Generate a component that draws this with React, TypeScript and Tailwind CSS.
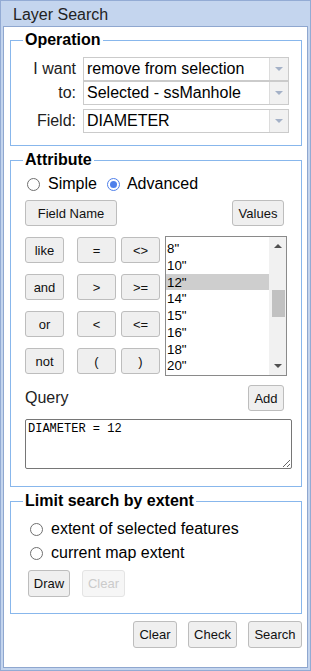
import React from "react";
import clsx from "clsx";

const sans = "font-['Liberation_Sans',Arial,sans-serif]";

type BtnProps = {
  children: React.ReactNode;
  className?: string;
  disabled?: boolean;
};

const Btn: React.FC<BtnProps> = ({ children, className, disabled }) => (
  <button
    type="button"
    disabled={disabled}
    className={clsx(
      "h-[26px] rounded-[3px] border text-[13px] leading-none",
      disabled
        ? "border-[#e4e4e4] bg-[#f6f6f6] text-[#cbcbcb]"
        : "border-[#bdbdbd] bg-[#efefef] text-[#111]",
      className
    )}
  >
    {children}
  </button>
);

const Select: React.FC<{ value: string; className?: string }> = ({ value, className }) => (
  <div className={clsx("flex h-[24px] border border-[#cbcbcb] bg-white", className)}>
    <div className="flex-1 truncate pl-[3px] text-[16px] leading-[22px] text-black">{value}</div>
    <div className="flex w-[19px] items-center justify-center border-l border-[#dcdcdc] bg-[#f1f1f1]">
      <span className="h-0 w-0 border-l-[4px] border-r-[4px] border-t-[4px] border-l-transparent border-r-transparent border-t-[#a4b1c7]" />
    </div>
  </div>
);

const Radio: React.FC<{ checked?: boolean }> = ({ checked }) => (
  <span
    className={clsx(
      "flex h-[13px] w-[13px] shrink-0 items-center justify-center rounded-full border bg-white",
      checked ? "border-[#4f80ea]" : "border-[#6f6f6f]"
    )}
  >
    {checked && <span className="h-[7px] w-[7px] rounded-full bg-[#4f80ea]" />}
  </span>
);

const Legend: React.FC<{ children: React.ReactNode }> = ({ children }) => (
  <legend className="ml-[12px] px-[2px] text-[16px] font-bold leading-[18px] text-black">{children}</legend>
);

const ops = [
  ["like", "=", "<>"],
  ["and", ">", ">="],
  ["or", "<", "<="],
  ["not", "(", ")"],
];

const sizes = ['8"', '10"', '12"', '14"', '15"', '16"', '18"', '20"'];

export default function App() {
  return (
    <div
      className={`${sans} flex h-[671px] w-[311px] flex-col border border-[#93abd4] bg-[#c4d5ee] px-[2px] pb-[2px] text-[#222]`}
    >
      <div className="h-[25px] pl-[10px] text-[16px] leading-[28px] text-[#222]">Layer Search</div>

      <div className="flex flex-1 flex-col border border-[#8fa7cf] bg-white pl-[6px] pr-[5px]">
        {/* Operation */}
        <fieldset className="mt-[4px] min-w-0 border border-[#88b7ec]">
          <Legend>Operation</Legend>
          <div className="pb-[12px] pr-[12px]">
            <div className="mt-[8px] flex">
              <div className="w-[65px] text-right text-[16px] leading-[24px] text-[#222]">
                I want
                <br />
                to:
              </div>
              <div className="ml-[7px] flex-1">
                <Select value="remove from selection" />
                <Select value="Selected - ssManhole" />
              </div>
            </div>
            <div className="mt-[4px] flex">
              <div className="w-[65px] text-right text-[16px] leading-[24px] text-[#222]">Field:</div>
              <Select value="DIAMETER" className="ml-[7px] flex-1" />
            </div>
          </div>
        </fieldset>

        {/* Attribute */}
        <fieldset className="mt-[5px] min-w-0 border border-[#88b7ec]">
          <Legend>Attribute</Legend>
          <div className="pb-[17px] pl-[14px] pr-[14px]">
            <div className="mt-[6px] flex h-[18px] items-center pl-[2px] text-[16px] text-black">
              <Radio />
              <span className="ml-[8px]">Simple</span>
              <span className="ml-[10px]">
                <Radio checked />
              </span>
              <span className="ml-[7px]">Advanced</span>
            </div>
            <div className="mt-[7px] flex justify-between">
              <Btn className="w-[92px]">Field Name</Btn>
              <Btn className="mr-[3px] w-[52px]">Values</Btn>
            </div>
            <div className="mt-[10px] flex">
              <div className="mt-[1px] flex flex-col gap-[11px]">
                {ops.map((row) => (
                  <div key={row[0]} className="flex">
                    <Btn className="w-[39px]">{row[0]}</Btn>
                    <Btn className="ml-[13px] w-[39px]">{row[1]}</Btn>
                    <Btn className="ml-[5px] w-[39px]">{row[2]}</Btn>
                  </div>
                ))}
              </div>
              <div className="ml-[5px] flex h-[140px] flex-1 overflow-hidden border border-[#8a8a8a] bg-white">
                <div className="flex-1 overflow-hidden pt-[3px]">
                  {sizes.map((s) => (
                    <div
                      key={s}
                      className={clsx(
                        "h-[16.75px] pl-[1px] text-[13.33px] leading-[17px] text-black",
                        s === '12"' && "bg-[#cecece]"
                      )}
                    >
                      {s}
                    </div>
                  ))}
                </div>
                <div className="flex w-[17px] flex-col items-center bg-[#f1f1f1]">
                  <span className="mt-[7px] h-0 w-0 border-b-[4px] border-l-[4px] border-r-[4px] border-b-[#505050] border-l-transparent border-r-transparent" />
                  <span className="ml-[1px] mt-[42px] h-[27px] w-[13px] bg-[#c1c1c1]" />
                  <span className="mb-[7px] mt-auto h-0 w-0 border-l-[4px] border-r-[4px] border-t-[4px] border-l-transparent border-r-transparent border-t-[#505050]" />
                </div>
              </div>
            </div>
            <div className="mt-[9px] flex items-center justify-between">
              <span className="text-[16px] text-[#222]">Query</span>
              <Btn className="mr-[3px] w-[36px]">Add</Btn>
            </div>
            <textarea
              readOnly
              defaultValue="DIAMETER = 12"
              className="mt-[8px] block h-[50px] w-[267px] rounded-[2px] border border-[#767676] px-[2px] pt-[2px] font-['Liberation_Mono',monospace] text-[12px] leading-[15px] text-black outline-none"
            />
          </div>
        </fieldset>

        {/* Limit search by extent */}
        <fieldset className="mt-[5px] min-w-0 border border-[#88b7ec]">
          <Legend>Limit search by extent</Legend>
          <div className="pb-[16px] pl-[17px]">
            <div className="mt-[7px] flex h-[24px] items-center pl-[2px] text-[16px] text-black">
              <Radio />
              <span className="ml-[8px]">extent of selected features</span>
            </div>
            <div className="flex h-[24px] items-center pl-[2px] text-[16px] text-black">
              <Radio />
              <span className="ml-[8px]">current map extent</span>
            </div>
            <div className="mt-[5px] flex">
              <Btn className="h-[27px] w-[42px]">Draw</Btn>
              <Btn className="ml-[12px] h-[27px] w-[43px]" disabled>
                Clear
              </Btn>
            </div>
          </div>
        </fieldset>

        <div className="mt-[7px] flex justify-end gap-[11px]">
          <Btn className="h-[27px] w-[44px]">Clear</Btn>
          <Btn className="h-[27px] w-[49px]">Check</Btn>
          <Btn className="h-[27px] w-[54px]">Search</Btn>
        </div>
      </div>
    </div>
  );
}
